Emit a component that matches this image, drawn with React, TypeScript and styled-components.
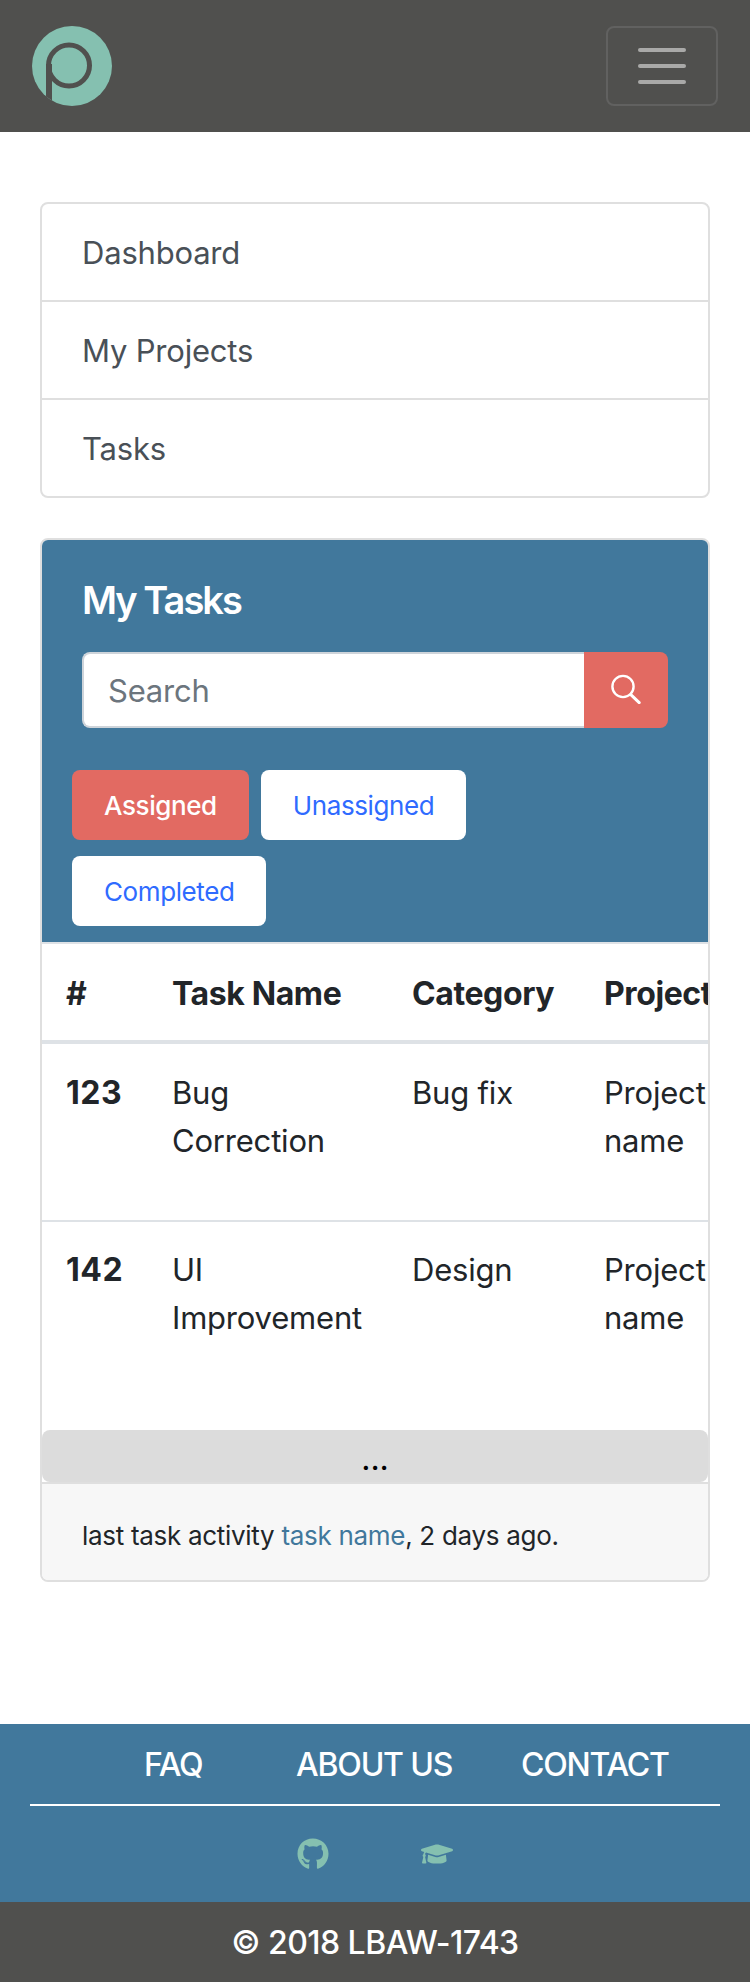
import React from 'react';
import styled, { createGlobalStyle } from 'styled-components';
import { FaGithub, FaGraduationCap } from 'react-icons/fa';

const DARK = '#50504e';
const BLUE = '#41789c';
const TEAL = '#85c0b0';
const CORAL = '#e26a62';
const LINE = '#dfdfdf';

const GlobalStyle = createGlobalStyle`
  html, body {
    margin: 0;
    padding: 0;
    background: #fff;
    font-family: Inter, "Open Sans", sans-serif;
    color: #212529;
  }
  * {
    box-sizing: border-box;
  }
`;

const Navbar = styled.nav`
  height: 132px;
  background: ${DARK};
  padding: 26px 32px;
  display: flex;
  justify-content: space-between;
`;

const Logo = styled.svg`
  width: 80px;
  height: 80px;
  display: block;
`;

const Toggler = styled.button`
  width: 112px;
  height: 80px;
  background: transparent;
  border: 2px solid #616160;
  border-radius: 8px;
  padding: 0;
  display: flex;
  flex-direction: column;
  align-items: center;
  justify-content: center;
  gap: 12px;
`;

const TogglerBar = styled.span`
  width: 48px;
  height: 4px;
  border-radius: 2px;
  background: #a9a9a8;
`;

const Main = styled.main`
  padding: 70px 40px 142px;
`;

const SideList = styled.ul`
  list-style: none;
  margin: 0 0 40px;
  padding: 0;
  border: 2px solid ${LINE};
  border-radius: 8px;
`;

const SideItem = styled.li`
  height: 96px;
  padding-left: 40px;
  display: flex;
  align-items: center;
  font-size: 31px;
  letter-spacing: -0.2px;
  color: #495057;
  & + & {
    height: 98px;
    border-top: 2px solid ${LINE};
  }
`;

const Card = styled.section`
  border: 2px solid ${LINE};
  border-radius: 8px;
  overflow: hidden;
`;

const CardHeader = styled.header`
  background: ${BLUE};
  padding: 36px 40px 16px;
`;

const CardTitle = styled.h5`
  margin: 0 0 28px;
  font-size: 38px;
  line-height: 48px;
  font-weight: 600;
  letter-spacing: -2px;
  color: #fff;
`;

const SearchGroup = styled.form`
  display: flex;
  height: 76px;
  margin-bottom: 42px;
`;

const SearchInput = styled.input`
  flex: 1;
  min-width: 0;
  border: 2px solid #ced4da;
  border-right: 0;
  border-radius: 8px 0 0 8px;
  padding: 0 24px;
  font-family: inherit;
  font-size: 31px;
  letter-spacing: -0.2px;
  color: #495057;
  background: #fff;
  &::placeholder {
    color: #6c757d;
    opacity: 1;
  }
`;

const SearchButton = styled.button`
  width: 84px;
  border: 0;
  border-radius: 0 8px 8px 0;
  background: ${CORAL};
  color: #fff;
  padding: 0;
  display: flex;
  align-items: center;
  justify-content: center;
`;

const SearchIcon = styled.svg`
  width: 30px;
  height: 30px;
  display: block;
  margin-top: -3px;
`;

const Filters = styled.div`
  display: flex;
  flex-wrap: wrap;
  gap: 16px 12px;
  margin-left: -10px;
  max-width: 590px;
`;

const FilterButton = styled.button<{ $active?: boolean }>`
  height: 70px;
  padding: 0 32px;
  border: 0;
  border-radius: 8px;
  font-family: inherit;
  font-size: 26px;
  letter-spacing: -0.4px;
  font-weight: ${(p) => (p.$active ? 500 : 400)};
  background: ${(p) => (p.$active ? CORAL : '#fff')};
  color: ${(p) => (p.$active ? '#fff' : '#2f6bff')};
`;

const TableClip = styled.div`
  overflow: hidden;
  border-top: 2px solid #dee2e6;
`;

const Table = styled.table`
  width: 700px;
  table-layout: fixed;
  border-collapse: separate;
  border-spacing: 0;
  margin-bottom: 32px;
`;

const Th = styled.th<{ $w: number }>`
  width: ${(p) => p.$w}px;
  height: 100px;
  padding: 2px 0 0 24px;
  text-align: left;
  font-size: 32px;
  font-weight: 700;
  letter-spacing: -0.4px;
  border-bottom: 4px solid #dee2e6;
  white-space: nowrap;
`;

const Row = styled.tr`
  & td,
  & th {
    padding-top: 25px;
  }
  & + & td,
  & + & th {
    height: 178px;
    padding-top: 24px;
    border-top: 2px solid #dee2e6;
  }
`;

const Cell = styled.td`
  height: 176px;
  padding: 24px 0 0 24px;
  vertical-align: top;
  font-size: 31px;
  line-height: 48px;
  letter-spacing: -0.2px;
`;

const IdCell = styled(Cell).attrs({ as: 'th' })`
  font-size: 32px;
  font-weight: 700;
  letter-spacing: 0.5px;
  text-align: left;
`;

const WrapText = styled.span<{ $w: number }>`
  display: block;
  max-width: ${(p) => p.$w}px;
`;

const MoreBar = styled.div`
  height: 52px;
  padding-top: 5px;
  background: #dcdcdc;
  border-radius: 8px;
  text-align: center;
  font-size: 32px;
  line-height: 47px;
  color: #000;
`;

const CardFooter = styled.footer`
  height: 98px;
  background: #f7f7f7;
  border-top: 2px solid ${LINE};
  padding: 6px 0 0 40px;
  display: flex;
  align-items: center;
  font-size: 26px;
  letter-spacing: -0.3px;
  white-space: pre;
`;

const TaskLink = styled.a`
  color: ${BLUE};
`;

const SiteFooter = styled.footer`
  background: ${BLUE};
  height: 178px;
  padding: 0 30px;
`;

const FooterLinks = styled.div`
  height: 82px;
  padding-left: 114px;
  border-bottom: 2px solid #fff;
  display: grid;
  grid-template-columns: 152px 225px auto;
  align-items: center;
`;

const FooterLink = styled.a`
  color: #fff;
  font-size: 32px;
  font-weight: 500;
  letter-spacing: -1.2px;
`;

const SocialRow = styled.div`
  display: flex;
  justify-content: center;
  align-items: center;
  gap: 92px;
  padding-top: 32px;
  color: ${TEAL};
`;

const Copyright = styled.div`
  height: 80px;
  background: ${DARK};
  color: #fff;
  display: flex;
  align-items: center;
  justify-content: center;
  font-size: 32px;
  font-weight: 500;
  letter-spacing: -0.55px;
`;

const TASKS = [
  { id: 123, name: 'Bug Correction', nameWidth: 190, category: 'Bug fix' },
  { id: 142, name: 'UI Improvement', nameWidth: 200, category: 'Design' },
];

export default function App() {
  return (
    <>
      <GlobalStyle />
      <Navbar>
        <Logo viewBox="0 0 80 80">
          <circle cx="40" cy="40" r="40" fill={TEAL} />
          <circle cx="37" cy="39.5" r="20.5" fill="none" stroke={DARK} strokeWidth="5" />
          <polygon points="14,38 20,38 20,74.6 14,70.5" fill={DARK} />
        </Logo>
        <Toggler aria-label="Toggle navigation">
          <TogglerBar />
          <TogglerBar />
          <TogglerBar />
        </Toggler>
      </Navbar>
      <Main>
        <SideList>
          <SideItem>Dashboard</SideItem>
          <SideItem>My Projects</SideItem>
          <SideItem>Tasks</SideItem>
        </SideList>
        <Card>
          <CardHeader>
            <CardTitle>My Tasks</CardTitle>
            <SearchGroup>
              <SearchInput placeholder="Search" />
              <SearchButton type="button" aria-label="Search">
                <SearchIcon viewBox="0 0 30 30" fill="none" stroke="currentColor" strokeLinecap="round">
                  <circle cx="12" cy="12.5" r="10.6" strokeWidth="2.4" />
                  <line x1="19.8" y1="20.6" x2="28.2" y2="28.6" strokeWidth="3" />
                </SearchIcon>
              </SearchButton>
            </SearchGroup>
            <Filters>
              <FilterButton $active>Assigned</FilterButton>
              <FilterButton>Unassigned</FilterButton>
              <FilterButton>Completed</FilterButton>
            </Filters>
          </CardHeader>
          <TableClip>
            <Table>
              <thead>
                <tr>
                  <Th $w={106}>#</Th>
                  <Th $w={240}>Task Name</Th>
                  <Th $w={192}>Category</Th>
                  <Th $w={162}>Project</Th>
                </tr>
              </thead>
              <tbody>
                {TASKS.map((task) => (
                  <Row key={task.id}>
                    <IdCell>{task.id}</IdCell>
                    <Cell>
                      <WrapText $w={task.nameWidth}>{task.name}</WrapText>
                    </Cell>
                    <Cell>{task.category}</Cell>
                    <Cell>
                      <WrapText $w={120}>Project name</WrapText>
                    </Cell>
                  </Row>
                ))}
              </tbody>
            </Table>
          </TableClip>
          <MoreBar>...</MoreBar>
          <CardFooter>
            last task activity <TaskLink>task name</TaskLink>, 2 days ago.
          </CardFooter>
        </Card>
      </Main>
      <SiteFooter>
        <FooterLinks>
          <FooterLink>FAQ</FooterLink>
          <FooterLink>ABOUT US</FooterLink>
          <FooterLink>CONTACT</FooterLink>
        </FooterLinks>
        <SocialRow>
          <FaGithub size={32} />
          <FaGraduationCap size={32} />
        </SocialRow>
      </SiteFooter>
      <Copyright>© 2018 LBAW-1743</Copyright>
    </>
  );
}
